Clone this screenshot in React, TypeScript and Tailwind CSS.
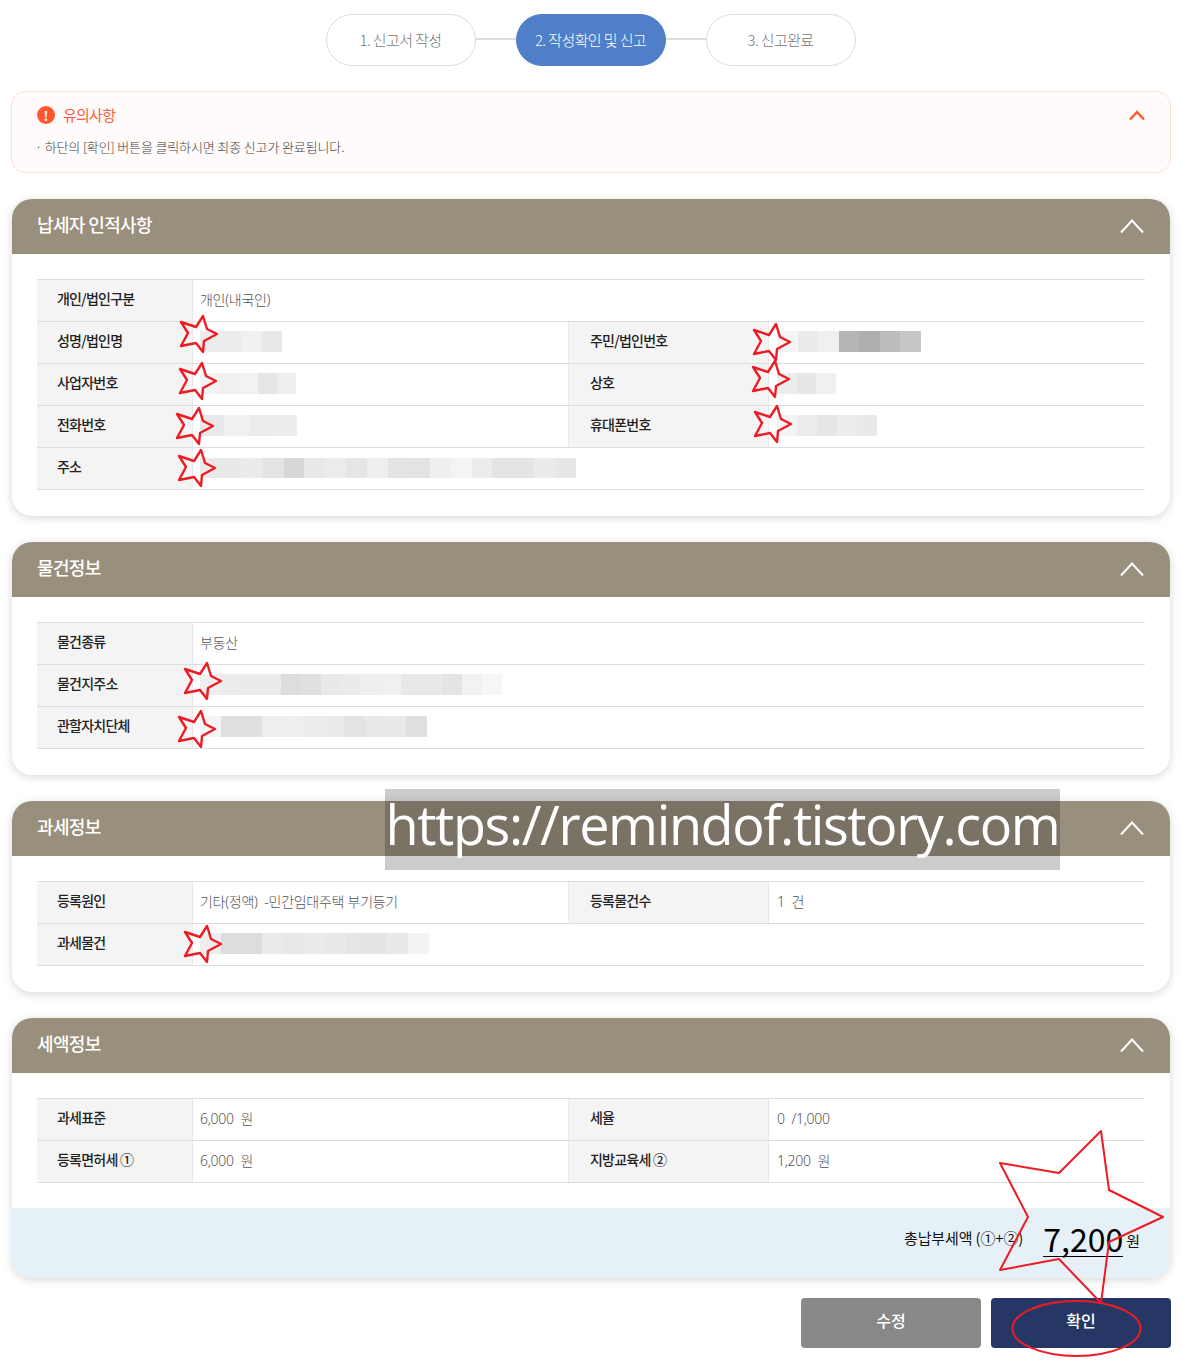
type Mosaic = { width: string; height?: string; colors: string[] };
type Cell = { label: string; value?: string; mosaic?: Mosaic };

const smallStar = "4,-18 8,-5 18,0 5,7 4,18 -3,9 -18,12 -11,-1 -18,-12 -3,-7";

const starSpots = [
  [199, 334],
  [198, 381],
  [195, 426],
  [197, 468],
  [772, 342],
  [771, 379],
  [773, 424],
  [203, 681],
  [197, 729],
  [203, 944],
];

const personRows: Cell[][] = [
  [{ label: "개인/법인구분", value: "개인(내국인)" }],
  [
    {
      label: "성명/법인명",
      mosaic: { width: "w-[82px]", colors: ["#ececec", "#ececec", "#f1f1f1", "#e8e9e9"] },
    },
    {
      label: "주민/법인번호",
      mosaic: {
        width: "w-[144px]",
        colors: ["#f5f5f5", "#ebebeb", "#f0f0f0", "#b4b5b6", "#afafaf", "#bcbcbc", "#c6c7c8"],
      },
    },
  ],
  [
    {
      label: "사업자번호",
      mosaic: { width: "w-[96px]", colors: ["#f3f3f3", "#f0f0f0", "#f1f2f4", "#e6e6e6", "#eeeeee"] },
    },
    {
      label: "상호",
      mosaic: { width: "w-[59px]", colors: ["#ededed", "#e7e7e7", "#f0f0f0"] },
    },
  ],
  [
    {
      label: "전화번호",
      mosaic: { width: "w-[97px]", colors: ["#e9e9e9", "#f1f1f1", "#ececec", "#ededed"] },
    },
    {
      label: "휴대폰번호",
      mosaic: { width: "w-[100px]", colors: ["#f4f4f4", "#ececec", "#e5e6e6", "#ededed", "#e8e9e9"] },
    },
  ],
  [
    {
      label: "주소",
      mosaic: {
        width: "w-[376px]",
        height: "h-[20px]",
        colors: [
          "#e9e9e9", "#e9e9e9", "#ebebea", "#e3e5e5", "#d8d8d8", "#e9e9e9", "#ebecec", "#e4e5e5", "#eeeeee",
          "#e4e4e4", "#e3e3e3", "#efefef", "#f4f4f4", "#ececec", "#e4e4e4", "#e4e4e4", "#ebebeb", "#e7e7e7",
        ],
      },
    },
  ],
];

const propertyRows: Cell[][] = [
  [{ label: "물건종류", value: "부동산" }],
  [
    {
      label: "물건지주소",
      mosaic: {
        width: "w-[302px]",
        colors: [
          "#efefef", "#ececec", "#ebebeb", "#ebebeb", "#dddddd", "#e0e0e0", "#e9e9e8", "#ebebea", "#eef0ef",
          "#f0f0ee", "#e7e8ea", "#e8e8e8", "#e5e4e2", "#f2f2f2", "#f6f6f6",
        ],
      },
    },
  ],
  [
    {
      label: "관할자치단체",
      mosaic: {
        width: "w-[227px]",
        colors: [
          "#f5f5f5", "#e0e0e0", "#e0e0e0", "#eeeeee", "#efefef", "#ececec", "#ebebeb", "#e3e3e3", "#e8e8e8",
          "#e8e9e9", "#e0e0e0",
        ],
      },
    },
  ],
];

const taxationRows: Cell[][] = [
  [
    { label: "등록원인", value: "기타(정액)  -민간임대주택 부기등기" },
    { label: "등록물건수", value: "1  건" },
  ],
  [
    {
      label: "과세물건",
      mosaic: {
        width: "w-[229px]",
        colors: [
          "#eeeeee", "#dcdddd", "#dcdddd", "#ebebeb", "#e8e8e8", "#ebebeb", "#e9e9e9", "#e5e5e5", "#e3e4e4",
          "#e9e9e9", "#f3f3f3",
        ],
      },
    },
  ],
];

const amountRows: Cell[][] = [
  [
    { label: "과세표준", value: "6,000  원" },
    { label: "세율", value: "0  /1,000" },
  ],
  [
    { label: "등록면허세 ①", value: "6,000  원" },
    { label: "지방교육세 ②", value: "1,200  원" },
  ],
];

function Chevron() {
  return (
    <svg width="26" height="16" viewBox="0 0 26 16" fill="none" className="mb-[2px] block">
      <path d="M2 14.5 13 2.5 24 14.5" stroke="#fff" strokeWidth="2" />
    </svg>
  );
}

function MosaicBlock({ mosaic }: { mosaic: Mosaic }) {
  return (
    <div className={`flex ${mosaic.width} ${mosaic.height ?? "h-[21px]"}`}>
      {mosaic.colors.map((color, i) => (
        <div key={i} className="flex-1" style={{ backgroundColor: color }} />
      ))}
    </div>
  );
}

function InfoTable({ rows }: { rows: Cell[][] }) {
  return (
    <div className="border-t border-[#dedede]">
      {rows.map((row, i) => (
        <div key={i} className="flex h-[42px] border-b border-[#dedede]">
          {row.map((cell, j) => (
            <div key={j} className={`flex ${j === 0 && row.length > 1 ? "w-[531px]" : "flex-1"}`}>
              <div
                className={`flex items-center bg-[#f4f4f4] pb-[4px] text-[14px] font-medium tracking-[-0.055em] text-[#222] border-r border-[#e9e9e9] ${
                  j === 0 ? "w-[156px] pl-[20px]" : "w-[201px] pl-[21px] border-l"
                }`}
              >
                {cell.label}
              </div>
              <div
                className={`flex flex-1 items-center whitespace-pre pb-[2px] font-['Noto_Sans','Noto_Sans_CJK_KR',sans-serif] text-[14px] font-light tracking-[-0.02em] text-[#555] ${
                  j === 0 ? "pl-[7px]" : "pl-[8px]"
                }`}
              >
                {cell.mosaic ? <MosaicBlock mosaic={cell.mosaic} /> : cell.value}
              </div>
            </div>
          ))}
        </div>
      ))}
    </div>
  );
}

function InfoCard({ title, rows, footer }: { title: string; rows: Cell[][]; footer?: boolean }) {
  return (
    <section className="rounded-[20px] bg-white shadow-[0_2px_10px_rgba(0,0,0,0.16)]">
      <div className="flex h-[55px] items-center justify-between rounded-t-[20px] bg-[#998f7d] px-[25px]">
        <h2 className="pb-[5px] text-[18px] font-medium tracking-[-0.035em] text-white">{title}</h2>
        <Chevron />
      </div>
      <div className={`px-[25px] pt-[25px] ${footer ? "pb-[25px]" : "pb-[26px]"}`}>
        <InfoTable rows={rows} />
      </div>
      {footer && (
        <div className="flex h-[70px] items-center justify-end rounded-b-[20px] bg-[#e6f0f7] pb-[10px] pr-[30px]">
          <span className="text-[15px] tracking-[-0.01em] text-[#111]">총납부세액 (①+②)</span>
          <span className="ml-[20px] border-b border-black text-[32px] leading-[36px] text-black">7,200</span>
          <span className="ml-[3px] mt-[6px] text-[15px] text-[#111]">원</span>
        </div>
      )}
    </section>
  );
}

function Step({ label, active }: { label: string; active?: boolean }) {
  return (
    <div
      className={`flex h-[52px] w-[150px] items-center justify-center rounded-[26px] border pt-[1px] text-[15px] font-light tracking-[-0.04em] ${
        active ? "border-[#4f7fc9] bg-[#4f7fc9] text-white" : "border-[#dddddd] bg-white text-[#777]"
      }`}
    >
      {label}
    </div>
  );
}

export default function App() {
  return (
    <div className="relative h-[1367px] w-[1181px] overflow-hidden bg-white font-['Noto_Sans_CJK_KR','Noto_Sans',sans-serif]">
      <div className="ml-[12px] w-[1158px] pt-[14px]">
        <div className="flex items-center justify-center pr-[1px]">
          <Step label="1. 신고서 작성" />
          <div className="mb-[2px] h-[2px] w-[40px] bg-[#dddddd]" />
          <Step label="2. 작성확인 및 신고" active />
          <div className="mb-[2px] h-[2px] w-[40px] bg-[#dddddd]" />
          <Step label="3. 신고완료" />
        </div>

        <div className="-mx-[1px] mt-[25px] h-[82px] rounded-[14px] border border-[#ffe0d8] bg-[#fffbfa] pl-[25px] pr-[25px] pt-[11px]">
          <div className="flex items-center justify-between">
            <div className="flex items-center">
              <span className="flex h-[18px] w-[18px] items-center justify-center rounded-full bg-[#ff5630] text-[13px] font-bold leading-none text-white">
                !
              </span>
              <span className="ml-[8px] text-[15px] leading-[24px] tracking-[-0.05em] text-[#ff5a3c]">유의사항</span>
            </div>
            <svg width="16" height="11" viewBox="0 0 16 11" fill="none" className="mt-[1px]">
              <path d="M1 9.5 8 2 15 9.5" stroke="#ff5a2d" strokeWidth="2.5" />
            </svg>
          </div>
          <p className="-ml-[2px] mt-[10px] text-[13px] font-light tracking-[-0.01em] text-[#444]">
            · 하단의 [확인] 버튼을 클릭하시면 최종 신고가 완료됩니다.
          </p>
        </div>

        <div className="mt-[26px] flex flex-col gap-[26px]">
          <InfoCard title="납세자 인적사항" rows={personRows} />
          <InfoCard title="물건정보" rows={propertyRows} />
          <InfoCard title="과세정보" rows={taxationRows} />
          <InfoCard title="세액정보" rows={amountRows} footer />
        </div>

        <div className="-mr-[1px] mt-[20px] flex justify-end gap-[10px]">
          <button className="h-[50px] w-[180px] rounded-[4px] bg-[#888888] pb-[6px] text-[16px] font-medium text-white">
            수정
          </button>
          <button className="h-[50px] w-[180px] rounded-[4px] bg-[#263766] pb-[6px] text-[16px] font-medium text-white">
            확인
          </button>
        </div>
      </div>

      {/* watermark pasted over the page */}
      <div className="absolute left-[385px] top-[789px] flex h-[81px] w-[675px] items-center justify-center bg-[rgba(0,0,0,0.2)] pb-[10px] font-['Open_Sans',sans-serif] text-[54px] tracking-[-0.026em] text-white">
        https://remindof.tistory.com
      </div>

      {/* red markup drawn on the screenshot */}
      <svg className="pointer-events-none absolute left-0 top-0" width="1181" height="1367" fill="none">
        {starSpots.map(([x, y], i) => (
          <polygon
            key={i}
            points={smallStar}
            transform={`translate(${x} ${y})`}
            stroke="#ed1c24"
            strokeWidth="2.4"
            strokeLinejoin="round"
          />
        ))}
        <polygon
          points="1101,1131 1109,1190 1163,1217 1109,1242 1101,1303 1059,1259 1000,1270 1028,1217 1000,1163 1059,1173"
          stroke="#ed1c24"
          strokeWidth="2"
          strokeLinejoin="round"
        />
        <ellipse cx="1076.5" cy="1328.5" rx="64" ry="27.5" stroke="#ed1c24" strokeWidth="2" />
      </svg>
    </div>
  );
}
